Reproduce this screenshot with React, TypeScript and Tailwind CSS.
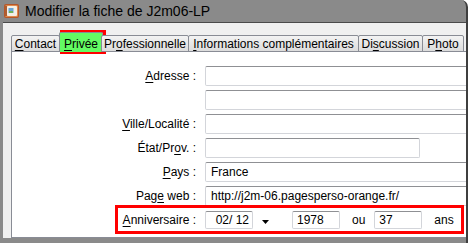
import React from 'react';

const font = { fontFamily: '"Liberation Sans", Arial, sans-serif' };

function Key({ children }: { children: React.ReactNode }) {
    return <span className="underline underline-offset-[2px] decoration-[1px]">{children}</span>;
}

function BookIcon() {
    return (
        <svg width="18" height="18" viewBox="0 0 18 18">
            <rect x="1" y="2" width="15" height="14" rx="2" fill="#b5572a" />
            <rect x="2" y="3" width="13" height="12" rx="1.5" fill="#e08a4c" />
            <rect x="4" y="4" width="10" height="10" rx="1" fill="#f4efe6" />
            <rect x="5.5" y="6" width="5" height="5" fill="#6aa6d8" />
            <rect x="6" y="9" width="4" height="2" fill="#6fb35a" />
            <path d="M3 4v10" stroke="#7a3316" strokeWidth="1" />
        </svg>
    );
}

const tabs: { label: React.ReactNode; w: string; active?: boolean }[] = [
    { label: <><Key>C</Key>ontact</>, w: 'w-[49px]' },
    { label: <><Key>P</Key>rivée</>, w: 'w-[44px]', active: true },
    { label: <>Pr<Key>o</Key>fessionnelle</>, w: 'w-[88px]' },
    { label: <><Key>I</Key>nformations complémentaires</>, w: 'w-[171px]' },
    { label: <>Di<Key>s</Key>cussion</>, w: 'w-[65px]' },
    { label: <>P<Key>h</Key>oto</>, w: 'w-[42px]' },
];

function Field({ value, className = 'w-[300px]' }: { value?: string; className?: string }) {
    return (
        <div className={`h-[20px] shrink-0 bg-white border border-[#d3d5da] border-t-[#8f9094] rounded-[2px] px-[5px] flex items-center text-black ${className}`}>
            {value}
        </div>
    );
}

function Row({ label, children }: { label: React.ReactNode; children: React.ReactNode }) {
    return (
        <div className="flex items-center h-[20px]">
            <div className="w-[185px] shrink-0 text-right pr-[1px]">{label}</div>
            <div className="ml-[8px] flex items-center">{children}</div>
        </div>
    );
}

const smallBox = 'h-[18px] bg-white border border-[#d3d5da] border-t-[#8f9094] rounded-[2px] flex items-center';

export default function App() {
    return (
        <div className="relative w-[470px] h-[243px] bg-white overflow-hidden text-[12px] leading-none text-black" style={font}>
            <div className="w-[468px] h-[243px] bg-[#8a8a8a] rounded-tr-[7px] border-r-2 border-[#3f3f3f] flex flex-col overflow-hidden">
                {/* title bar */}
                <div className="h-[22px] shrink-0 flex items-center pl-[3px] gap-[4px]">
                    <BookIcon />
                    <span className="text-[14px] text-black">Modifier la fiche de J2m06-LP</span>
                </div>

                {/* client area */}
                <div className="flex-1 ml-[3px] mb-[5px] bg-[#f0f0f0] border-t border-[#4a4a4a] pt-[10px] pl-[8px] flex flex-col overflow-hidden">
                    <div className="flex items-end h-[19px] shrink-0 -mb-px relative z-10">
                        {tabs.map((t, i) => (
                            <div
                                key={i}
                                className={`${t.w} shrink-0 flex items-center justify-center whitespace-nowrap border border-[#898c95] rounded-t-[2px] ${t.active
                                    ? 'h-[20px] bg-[#63fb63] border-b-0 -mx-px'
                                    : 'h-[17px] bg-gradient-to-b from-[#f3f3f3] to-[#dcdcdc] -ml-px first:ml-0'
                                    }`}
                            >
                                <span className={t.active ? 'pt-[2px]' : 'pt-[1px]'}>{t.label}</span>
                            </div>
                        ))}
                    </div>

                    <div className="flex-1 bg-white border border-[#898c95] border-r-0 pt-[14px] flex flex-col gap-[4px]">
                        <Row label={<><Key>A</Key>dresse :</>}><Field /></Row>
                        <Row label=""><Field /></Row>
                        <Row label={<><Key>V</Key>ille/Localité :</>}><Field /></Row>
                        <Row label={<>État/Pr<Key>o</Key>v. :</>}><Field className="w-[215px]" /></Row>
                        <Row label={<><Key>P</Key>ays :</>}><Field value="France" /></Row>
                        <Row label={<>Pag<Key>e</Key> web :</>}><Field value="http://j2m-06.pagesperso-orange.fr/" /></Row>
                        <div className="relative">
                            <Row label={<><Key>A</Key>nniversaire :</>}>
                                <div className="flex items-center h-[18px]">
                                    <div className={`w-[48px] ${smallBox} justify-end pr-[3px]`}>02/ 12</div>
                                    <svg width="7" height="4" viewBox="0 0 7 4" className="ml-[9px] mt-[4px]">
                                        <path d="M0 0h7L3.5 4z" fill="#000" />
                                    </svg>
                                    <div className={`ml-[23px] w-[48px] ${smallBox} pl-[4px]`}>1978</div>
                                    <span className="ml-[12px]">ou</span>
                                    <div className={`ml-[9px] w-[48px] ${smallBox} pl-[4px]`}>37</div>
                                    <span className="ml-[12px]">ans</span>
                                </div>
                            </Row>
                            <div className="absolute left-[103px] top-[-5px] w-[349px] h-[29px] border-[3px] border-[#ff0000] pointer-events-none" />
                        </div>
                    </div>
                </div>
            </div>
            {/* red box around the active tab */}
            <div className="absolute left-[60px] top-[30px] w-[46px] h-[24px] border-[3px] border-[#ff0000] pointer-events-none" />
        </div>
    );
}
